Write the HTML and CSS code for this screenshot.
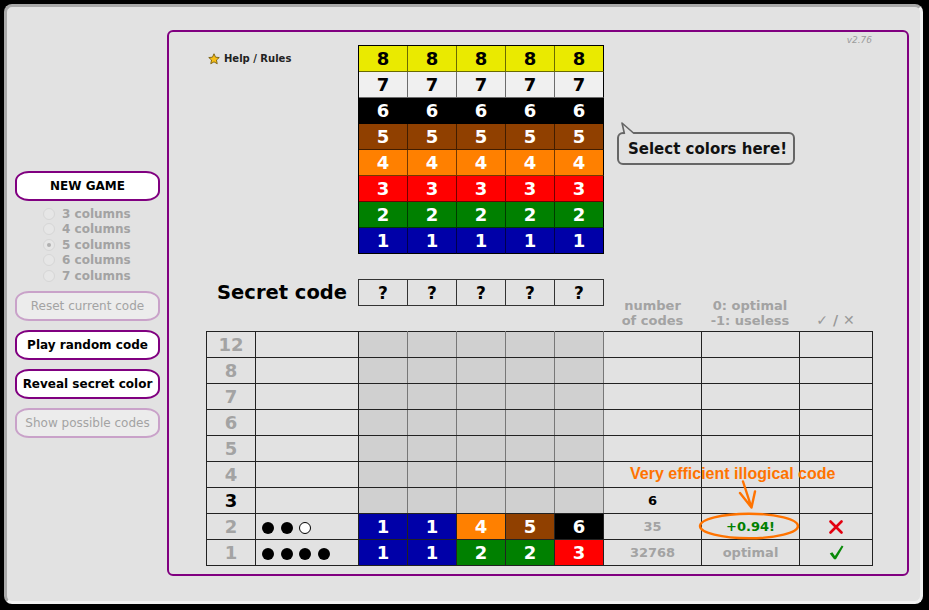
FILE: index.html
```html
<!DOCTYPE html>
<html lang="en">
<head>
<meta charset="utf-8">
<title>Mastermind</title>
<link rel="stylesheet" href="styles.css">
</head>
<body>
<div class="app">
  <aside class="sidebar">
    <button class="btn btn-first">NEW GAME</button>
    <div class="radios">
      <label class="radio"><span class="dot"></span>3 columns</label>
      <label class="radio"><span class="dot"></span>4 columns</label>
      <label class="radio"><span class="dot on"></span>5 columns</label>
      <label class="radio"><span class="dot"></span>6 columns</label>
      <label class="radio"><span class="dot"></span>7 columns</label>
    </div>
    <button class="btn btn-off btn-reset">Reset current code</button>
    <button class="btn">Play random code</button>
    <button class="btn">Reveal secret color</button>
    <button class="btn btn-off">Show possible codes</button>
  </aside>

  <main class="board">
    <div class="top">
      <a class="help"><svg class="star" viewBox="0 0 24 24" width="12" height="12"><path d="M12 1.5l3.1 6.9 7.4.7-5.6 5 1.6 7.4L12 17.7 5.5 21.5l1.6-7.4-5.6-5 7.4-.7z" fill="#f7be16" stroke="#6b5200" stroke-width="1.6" stroke-linejoin="round"/></svg>Help / Rules</a>
      <div class="palette">
        <span class="k8">8</span><span class="k8">8</span><span class="k8">8</span><span class="k8">8</span><span class="k8">8</span>
        <span class="k7">7</span><span class="k7">7</span><span class="k7">7</span><span class="k7">7</span><span class="k7">7</span>
        <span class="k6">6</span><span class="k6">6</span><span class="k6">6</span><span class="k6">6</span><span class="k6">6</span>
        <span class="k5">5</span><span class="k5">5</span><span class="k5">5</span><span class="k5">5</span><span class="k5">5</span>
        <span class="k4">4</span><span class="k4">4</span><span class="k4">4</span><span class="k4">4</span><span class="k4">4</span>
        <span class="k3">3</span><span class="k3">3</span><span class="k3">3</span><span class="k3">3</span><span class="k3">3</span>
        <span class="k2">2</span><span class="k2">2</span><span class="k2">2</span><span class="k2">2</span><span class="k2">2</span>
        <span class="k1">1</span><span class="k1">1</span><span class="k1">1</span><span class="k1">1</span><span class="k1">1</span>
      </div>
      <div class="bubble">Select colors here!<svg class="tail" viewBox="0 0 18 14" width="18" height="14"><path d="M5.5 14 L3 2 L16 14 Z" fill="#e2e2e2"/><path d="M5.5 13 L3 2 L15 12.5" fill="none" stroke="#666" stroke-width="1.6" stroke-linejoin="round"/></svg></div>
      <div class="version">v2.76</div>
    </div>

    <div class="code-row">
      <div class="secret-label">Secret code</div>
      <div class="secret"><span>?</span><span>?</span><span>?</span><span>?</span><span>?</span></div>
      <div class="colhead">number<br>of codes</div>
      <div class="colhead">0: optimal<br>-1: useless</div>
      <div class="colhead marks-head">✓ / ✕</div>
    </div>

    <table class="history">
      <colgroup>
        <col class="w-n"><col class="w-fb"><col class="w-c"><col class="w-c"><col class="w-c"><col class="w-c"><col class="w-c"><col class="w-v"><col class="w-v"><col class="w-ok">
      </colgroup>
      <tr><td class="rn">12</td><td></td><td class="e"></td><td class="e"></td><td class="e"></td><td class="e"></td><td class="e"></td><td></td><td></td><td></td></tr>
      <tr><td class="rn">8</td><td></td><td class="e"></td><td class="e"></td><td class="e"></td><td class="e"></td><td class="e"></td><td></td><td></td><td></td></tr>
      <tr><td class="rn">7</td><td></td><td class="e"></td><td class="e"></td><td class="e"></td><td class="e"></td><td class="e"></td><td></td><td></td><td></td></tr>
      <tr><td class="rn">6</td><td></td><td class="e"></td><td class="e"></td><td class="e"></td><td class="e"></td><td class="e"></td><td></td><td></td><td></td></tr>
      <tr><td class="rn">5</td><td></td><td class="e"></td><td class="e"></td><td class="e"></td><td class="e"></td><td class="e"></td><td></td><td></td><td></td></tr>
      <tr><td class="rn">4</td><td></td><td class="e"></td><td class="e"></td><td class="e"></td><td class="e"></td><td class="e"></td><td></td><td></td><td></td></tr>
      <tr><td class="rn cur">3</td><td></td><td class="e"></td><td class="e"></td><td class="e"></td><td class="e"></td><td class="e"></td><td class="val dark">6</td><td></td><td></td></tr>
      <tr><td class="rn">2</td><td class="fb"><span class="peg"></span><span class="peg"></span><span class="peg w"></span></td><td class="pc k1">1</td><td class="pc k1">1</td><td class="pc k4">4</td><td class="pc k5">5</td><td class="pc k6">6</td><td class="val">35</td><td class="val good">+0.94!</td><td class="mark"><svg viewBox="0 0 14 14" width="14" height="14"><path d="M1.5 1.5 L12.5 12.5 M12.5 1.5 L1.5 12.5" stroke="#e3000f" stroke-width="2.6" stroke-linecap="round"/></svg></td></tr>
      <tr><td class="rn">1</td><td class="fb"><span class="peg"></span><span class="peg"></span><span class="peg"></span><span class="peg"></span></td><td class="pc k1">1</td><td class="pc k1">1</td><td class="pc k2">2</td><td class="pc k2">2</td><td class="pc k3">3</td><td class="val">32768</td><td class="val">optimal</td><td class="mark"><svg viewBox="0 0 16 16" width="15" height="15"><path d="M0.8 9 L3.6 7.6 L6.3 11.6 L13.6 0.6 L15.4 1.6 L7.4 15.2 L5.4 15.2 Z" fill="#0a8a0a"/></svg></td></tr>
    </table>

    <div class="note">Very efficient illogical code</div>
    <svg class="note-marks" viewBox="0 0 120 65" width="120" height="65">
      <path d="M53 1.5 L61.5 27.5 M50 13 L61.5 27.5 L65 11.5" fill="none" stroke="#ff7300" stroke-width="2.4" stroke-linecap="round" stroke-linejoin="round"/>
      <ellipse cx="59" cy="46" rx="49" ry="12.3" fill="none" stroke="#ff7300" stroke-width="2.4"/>
    </svg>
  </main>
</div>
</body>
</html>
```

FILE: styles.css
```css
html, body {
  margin: 0;
}
body {
  background: #000;
  padding: 4px;
  font-family: "DejaVu Sans", Verdana, sans-serif;
  color: #000;
}

.app {
  width: 919px;
  height: 600px;
  box-sizing: border-box;
  background: #e2e2e2;
  border: 3px solid;
  border-color: #a9a9a9 #f2f2f2 #f2f2f2 #a9a9a9;
  border-radius: 8px;
  display: flex;
  align-items: flex-start;
  padding: 23px 0 0 8px;
  gap: 7px;
}

/* ---------- sidebar ---------- */
.sidebar {
  width: 145px;
  margin-top: 141px;
  display: flex;
  flex-direction: column;
}
.btn {
  height: 30px;
  box-sizing: border-box;
  margin: 9px 0 0;
  padding: 0;
  border: 2px solid #800080;
  border-radius: 14px / 10px;
  background: #fff;
  font-family: "DejaVu Sans", Verdana, sans-serif;
  font-weight: bold;
  font-size: 12px;
  color: #000;
}
.btn-first {
  margin-top: 0;
}
.btn-off {
  background: #ececec;
  border-color: #c9a2c9;
  color: #a3a3a3;
  font-weight: normal;
}
.btn-reset {
  margin-top: 7px;
}
.radios {
  margin-top: 5px;
  padding-left: 28px;
}
.radio {
  display: flex;
  align-items: center;
  gap: 7px;
  height: 15.5px;
  font-size: 12px;
  font-weight: bold;
  color: #a3a3a3;
}
.dot {
  width: 12px;
  height: 12px;
  box-sizing: border-box;
  border-radius: 50%;
  border: 1px solid #d6d6d6;
  background: #e6e6e6;
  display: flex;
  align-items: center;
  justify-content: center;
}
.dot.on::after {
  content: "";
  width: 4px;
  height: 4px;
  border-radius: 50%;
  background: #b0b0b0;
}

/* ---------- board ---------- */
.board {
  position: relative;
  width: 742px;
  height: 546px;
  box-sizing: border-box;
  border: 2px solid #800080;
  border-radius: 6px;
  padding: 13px 35px 0 37px;
}

.top {
  display: flex;
  align-items: flex-start;
}
.help {
  width: 152px;
  box-sizing: border-box;
  padding: 8px 0 0 2px;
  display: flex;
  align-items: center;
  gap: 4px;
  font-size: 10px;
  font-weight: bold;
  color: #222;
  line-height: 12px;
}
.star {
  flex: none;
}

.palette {
  display: grid;
  grid-template-columns: repeat(5, 49px);
  grid-auto-rows: 26px;
  border-top: 1px solid #000;
  border-left: 1px solid #000;
}
.palette span {
  border-right: 1px solid rgba(0, 0, 0, 0.55);
  border-bottom: 1px solid rgba(0, 0, 0, 0.55);
  display: flex;
  align-items: center;
  justify-content: center;
  font-size: 18px;
  font-weight: bold;
}
.palette span:nth-child(5n) {
  border-right-color: #000;
}
.palette span:nth-last-child(-n+5) {
  border-bottom-color: #000;
}

.k8 { background: #eaea00; color: #000; }
.k7 { background: #f0f0f0; color: #000; }
.k6 { background: #000; color: #fff; }
.k5 { background: #904000; color: #fff; }
.k4 { background: #ff8000; color: #fff; }
.k3 { background: #f00; color: #fff; }
.k2 { background: #008000; color: #fff; }
.k1 { background: #0000a8; color: #fff; }

.bubble {
  position: relative;
  margin: 87px 0 0 13px;
  width: 178px;
  height: 33px;
  box-sizing: border-box;
  border: 2px solid #666;
  border-radius: 6px;
  padding: 1px 9px 0;
  font-size: 15px;
  font-weight: bold;
  line-height: 29px;
  color: #111;
  white-space: nowrap;
}
.tail {
  position: absolute;
  left: 0;
  top: -13px;
}

.version {
  margin: -10px 0 0 auto;
  font-size: 9px;
  font-style: italic;
  line-height: 11px;
  color: #9c9c9c;
}

.code-row {
  display: grid;
  grid-template-columns: 152px 246px 97px 98px 73px;
  height: 49px;
  margin-top: 25px;
}
.secret-label {
  text-align: right;
  padding: 1px 11px 0 0;
  font-size: 19.5px;
  font-weight: bold;
  line-height: 26px;
  white-space: nowrap;
}
.secret {
  align-self: start;
  display: grid;
  grid-template-columns: repeat(5, 49px);
  grid-auto-rows: 26px;
  border-top: 1px solid #333;
  border-left: 1px solid #333;
}
.secret span {
  border-right: 1px solid #333;
  border-bottom: 1px solid #333;
  display: flex;
  align-items: center;
  justify-content: center;
  font-size: 17px;
  font-weight: bold;
}
.colhead {
  align-self: end;
  text-align: center;
  font-size: 13px;
  font-weight: bold;
  line-height: 15px;
  color: #a3a3a3;
}
.colhead.marks-head {
  font-size: 14px;
  color: #999;
}

/* ---------- history table ---------- */
.history {
  margin-top: 3px;
  border-collapse: collapse;
  table-layout: fixed;
  width: 667px;
}
.w-n { width: 49px; }
.w-fb { width: 103px; }
.w-c { width: 49px; }
.w-v { width: 98px; }
.w-ok { width: 73px; }
.history td {
  border: 1px solid #222;
  height: 25px;
  padding: 0;
  text-align: center;
  vertical-align: middle;
}
.history td.e {
  background: #d0d0d0;
  border-left-color: #777;
  border-right-color: #777;
}
.rn {
  font-size: 18px;
  font-weight: bold;
  color: #a3a3a3;
}
.rn.cur {
  color: #000;
}
.history td.fb {
  text-align: left;
  padding-left: 6px;
}
.peg {
  display: inline-block;
  width: 12px;
  height: 12px;
  box-sizing: border-box;
  border-radius: 50%;
  background: #000;
  margin-right: 6.5px;
  vertical-align: middle;
}
.peg.w {
  background: #fff;
  border: 1px solid #000;
}
.pc {
  font-size: 18px;
  font-weight: bold;
}
.val {
  font-size: 13px;
  font-weight: bold;
  color: #a3a3a3;
}
.val.dark {
  color: #000;
}
.val.good {
  color: #008000;
}
.mark svg {
  display: block;
  margin: 0 auto;
}

.note {
  position: absolute;
  left: 461px;
  top: 433px;
  font-family: "Liberation Sans", Arial, sans-serif;
  font-size: 16px;
  font-weight: bold;
  line-height: 18px;
  color: #ff7300;
  white-space: nowrap;
}
.note-marks {
  position: absolute;
  left: 521px;
  top: 448px;
}
```
